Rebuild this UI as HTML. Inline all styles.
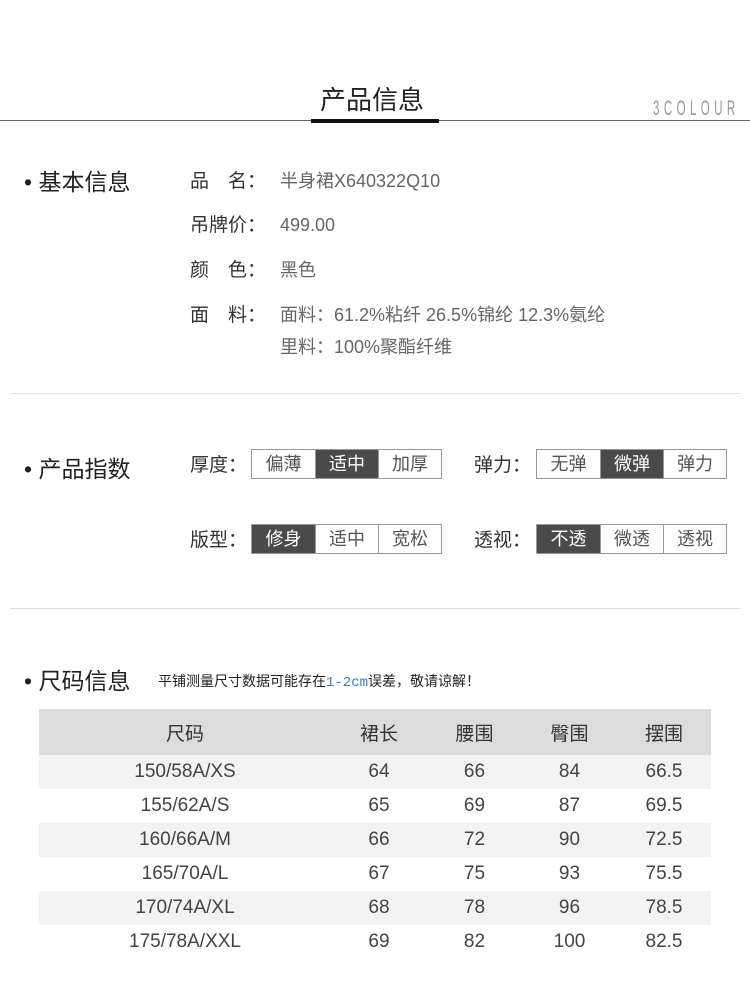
<!DOCTYPE html><html><head><meta charset="utf-8"><style>
*{margin:0;padding:0;box-sizing:border-box}
body{width:750px;height:1001px;background:#fff;position:relative;font-family:"Liberation Sans","Noto Sans CJK SC",sans-serif;color:#333;overflow:hidden}
.a{position:absolute;white-space:nowrap}
.hl{position:absolute;left:10px;right:10px;height:1px;background:#ddd}
.sec{font-size:23px;color:#222}
.lab{font-size:19px;color:#333}
.lab b{font-weight:normal;display:inline-block;width:90px}
.val{font-size:18px;color:#666}
.box{position:absolute;display:flex;border:1px solid #999;height:30px}
.box span{width:63px;text-align:center;font-size:18px;line-height:28px;color:#555;border-left:1px solid #999}
.box span:first-child{border-left:none}
.box span.on{background:#4a4a4a;color:#fff}
table{position:absolute;left:39px;top:709px;width:672px;border-collapse:collapse;font-size:19px;color:#444}
td{text-align:center;height:34px;padding:0}
tr.h td{background:#dcdcdc;height:46px;color:#333}
tr.g td{background:#f3f3f3}
</style></head><body>
<div class="a" style="left:320px;top:80px;font-size:26px;color:#222">产品信息</div>
<div style="position:absolute;left:0;top:120px;width:750px;height:1px;background:#666"></div>
<div style="position:absolute;left:311px;top:119px;width:128px;height:4px;background:#111"></div>
<div class="a" style="left:653px;top:97px;font-size:21px;letter-spacing:8px;color:#999;transform:scaleX(0.55);transform-origin:left">3COLOUR</div>

<div class="a sec" style="left:24px;top:163px">• 基本信息</div>
<div class="a lab" style="left:190px;top:166px"><b>品　名：</b><span class="val">半身裙X640322Q10</span></div>
<div class="a lab" style="left:190px;top:210px"><b>吊牌价：</b><span class="val">499.00</span></div>
<div class="a lab" style="left:190px;top:255px"><b>颜　色：</b><span class="val">黑色</span></div>
<div class="a lab" style="left:190px;top:300px"><b>面　料：</b><span class="val">面料：61.2%粘纤 26.5%锦纶 12.3%氨纶</span></div>
<div class="a val" style="left:280px;top:333px">里料：100%聚酯纤维</div>
<div class="hl" style="top:393px"></div>

<div class="a sec" style="left:24px;top:450px">• 产品指数</div>
<div class="a lab" style="left:190px;top:450px">厚度：</div>
<div class="box" style="left:251px;top:449px"><span>偏薄</span><span class="on">适中</span><span>加厚</span></div>
<div class="a lab" style="left:474px;top:450px">弹力：</div>
<div class="box" style="left:536px;top:449px"><span>无弹</span><span class="on">微弹</span><span>弹力</span></div>
<div class="a lab" style="left:190px;top:525px">版型：</div>
<div class="box" style="left:251px;top:524px"><span class="on">修身</span><span>适中</span><span>宽松</span></div>
<div class="a lab" style="left:474px;top:525px">透视：</div>
<div class="box" style="left:536px;top:524px"><span class="on">不透</span><span>微透</span><span>透视</span></div>
<div class="hl" style="top:608px"></div>

<div class="a sec" style="left:24px;top:662px">• 尺码信息</div>
<div class="a" style="left:158px;top:671px;font-size:14px;color:#222">平铺测量尺寸数据可能存在<span style="color:#3a7fc0;font-family:'Liberation Mono',monospace">1-2cm</span>误差，敬请谅解！</div>
<table>
<colgroup><col style="width:292px"><col style="width:96px"><col style="width:95px"><col style="width:95px"><col style="width:94px"></colgroup>
<tr class="h"><td>尺码</td><td>裙长</td><td>腰围</td><td>臀围</td><td>摆围</td></tr>
<tr class="g"><td>150/58A/XS</td><td>64</td><td>66</td><td>84</td><td>66.5</td></tr>
<tr><td>155/62A/S</td><td>65</td><td>69</td><td>87</td><td>69.5</td></tr>
<tr class="g"><td>160/66A/M</td><td>66</td><td>72</td><td>90</td><td>72.5</td></tr>
<tr><td>165/70A/L</td><td>67</td><td>75</td><td>93</td><td>75.5</td></tr>
<tr class="g"><td>170/74A/XL</td><td>68</td><td>78</td><td>96</td><td>78.5</td></tr>
<tr><td>175/78A/XXL</td><td>69</td><td>82</td><td>100</td><td>82.5</td></tr>
</table>
</body></html>
